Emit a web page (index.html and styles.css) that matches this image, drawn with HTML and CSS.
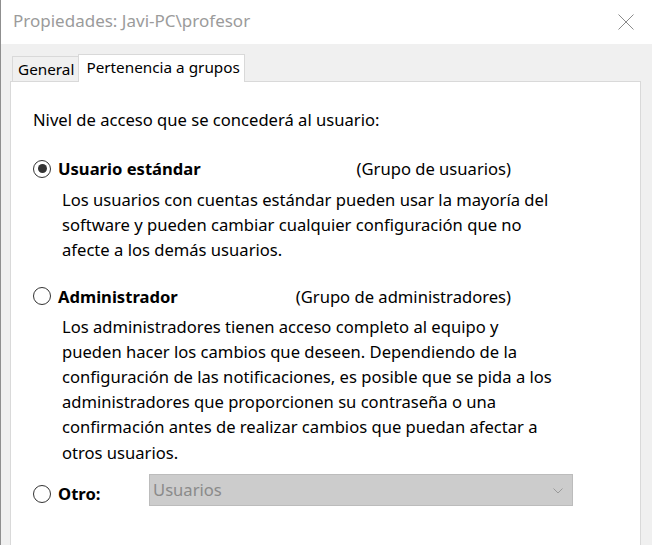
FILE: index.html
```html
<!DOCTYPE html>
<html lang="es">
<head>
<meta charset="utf-8">
<title>Propiedades</title>
<link rel="stylesheet" href="styles.css">
</head>
<body>
<div class="window">
  <div class="titlebar">
    <span class="title">Propiedades: Javi-PC\profesor</span>
    <svg class="close" width="16" height="16" viewBox="0 0 16 16"><path d="M0.5 0.5 L15.5 15.5 M15.5 0.5 L0.5 15.5" stroke="#8a8a8a" stroke-width="1" fill="none"/></svg>
  </div>
  <div class="content">
    <div class="tabs">
      <div class="tab">General</div>
      <div class="tab active">Pertenencia a grupos</div>
    </div>
    <div class="panel">
      <p class="intro">Nivel de acceso que se concederá al usuario:</p>

      <div class="option opt-std">
        <div class="opt-head">
          <span class="radio checked"></span>
          <span class="opt-label">Usuario estándar</span>
          <span class="group">(Grupo de usuarios)</span>
        </div>
        <p class="desc">Los usuarios con cuentas estándar pueden usar la mayoría del<br>software y pueden cambiar cualquier configuración que no<br>afecte a los demás usuarios.</p>
      </div>

      <div class="option opt-admin">
        <div class="opt-head">
          <span class="radio"></span>
          <span class="opt-label">Administrador</span>
          <span class="group">(Grupo de administradores)</span>
        </div>
        <p class="desc">Los administradores tienen acceso completo al equipo y<br>pueden hacer los cambios que deseen. Dependiendo de la<br>configuración de las notificaciones, es posible que se pida a los<br>administradores que proporcionen su contraseña o una<br>confirmación antes de realizar cambios que puedan afectar a<br>otros usuarios.</p>
      </div>

      <div class="other">
        <div class="other-left">
          <span class="radio"></span>
          <span class="opt-label">Otro:</span>
        </div>
        <div class="select">
          <span>Usuarios</span>
          <svg width="10" height="6" viewBox="0 0 10 6"><path d="M0.5 0.5 L5 5 L9.5 0.5" stroke="#9a9a9a" stroke-width="1" fill="none"/></svg>
        </div>
      </div>
    </div>
  </div>
</div>
</body>
</html>
```
FILE: styles.css
```css
html, body {
  margin: 0;
  padding: 0;
  height: 100%;
}
body {
  font-family: "Noto Sans", "Open Sans", sans-serif;
  color: #000;
  overflow: hidden;
}
.window {
  height: 545px;
  display: flex;
  flex-direction: column;
  border-left: 1px solid #8f8f8f;
  box-sizing: border-box;
}
.titlebar {
  height: 44px;
  flex: none;
  background: #fff;
  display: flex;
  align-items: center;
  justify-content: space-between;
  padding: 0 18px 0 12px;
  box-sizing: border-box;
}
.title {
  font-size: 17px;
  color: #9b9b9b;
  margin-top: -3px;
}
.close {
  margin-top: -1px;
}
.content {
  flex: 1;
  background: #f0f0f0;
  padding: 10px 11px 0 9px;
  display: flex;
  flex-direction: column;
}
.tabs {
  display: flex;
  align-items: flex-end;
  height: 27px;
  padding-left: 2px;
  flex: none;
}
.tab {
  height: 25px;
  box-sizing: border-box;
  border: 1px solid #d9d9d9;
  border-bottom: none;
  background: #f0f0f0;
  font-size: 15.3px;
  line-height: 24px;
  padding: 0 4px 0 5px;
}
.tab.active {
  height: 28px;
  margin-bottom: -1px;
  margin-left: -1px;
  background: #fff;
  position: relative;
  z-index: 1;
  line-height: 24px;
  padding: 0 4px 0 7px;
}
.panel {
  flex: 1;
  background: #fff;
  border: 1px solid #d9d9d9;
  border-bottom: none;
  padding: 25px 0 0 22px;
  font-size: 16.6px;
}
.intro {
  margin: 0;
  line-height: 25px;
}
.option {
  margin-top: 24px;
}
.opt-admin {
  margin-top: 21px;
}
.opt-head {
  display: flex;
  align-items: center;
  width: 478px;
  height: 25px;
  margin-left: 0;
}
.radio {
  width: 18px;
  height: 18px;
  box-sizing: border-box;
  border: 1px solid #333;
  border-radius: 50%;
  flex: none;
  display: inline-flex;
  align-items: center;
  justify-content: center;
}
.radio.checked::after {
  content: "";
  width: 9px;
  height: 9px;
  border-radius: 50%;
  background: #333;
}
.opt-label {
  font-weight: bold;
  margin-left: 7px;
}
.group {
  margin-left: auto;
}
.desc {
  margin: 6px 0 0 29px;
  line-height: 25.2px;
}
.opt-admin .desc {
  margin-top: 5px;
}
.other {
  display: flex;
  align-items: center;
  margin-top: 9px;
}
.other-left {
  width: 116px;
  display: flex;
  align-items: center;
  margin-top: 8px;
}
.select {
  width: 424px;
  height: 32px;
  box-sizing: border-box;
  background: #cccccc;
  border: 1px solid #bcbcbc;
  display: flex;
  align-items: center;
  justify-content: space-between;
  padding: 0 9px 0 3px;
  color: #8a8a8a;
}
.select svg {
  margin-top: 2px;
}
```
